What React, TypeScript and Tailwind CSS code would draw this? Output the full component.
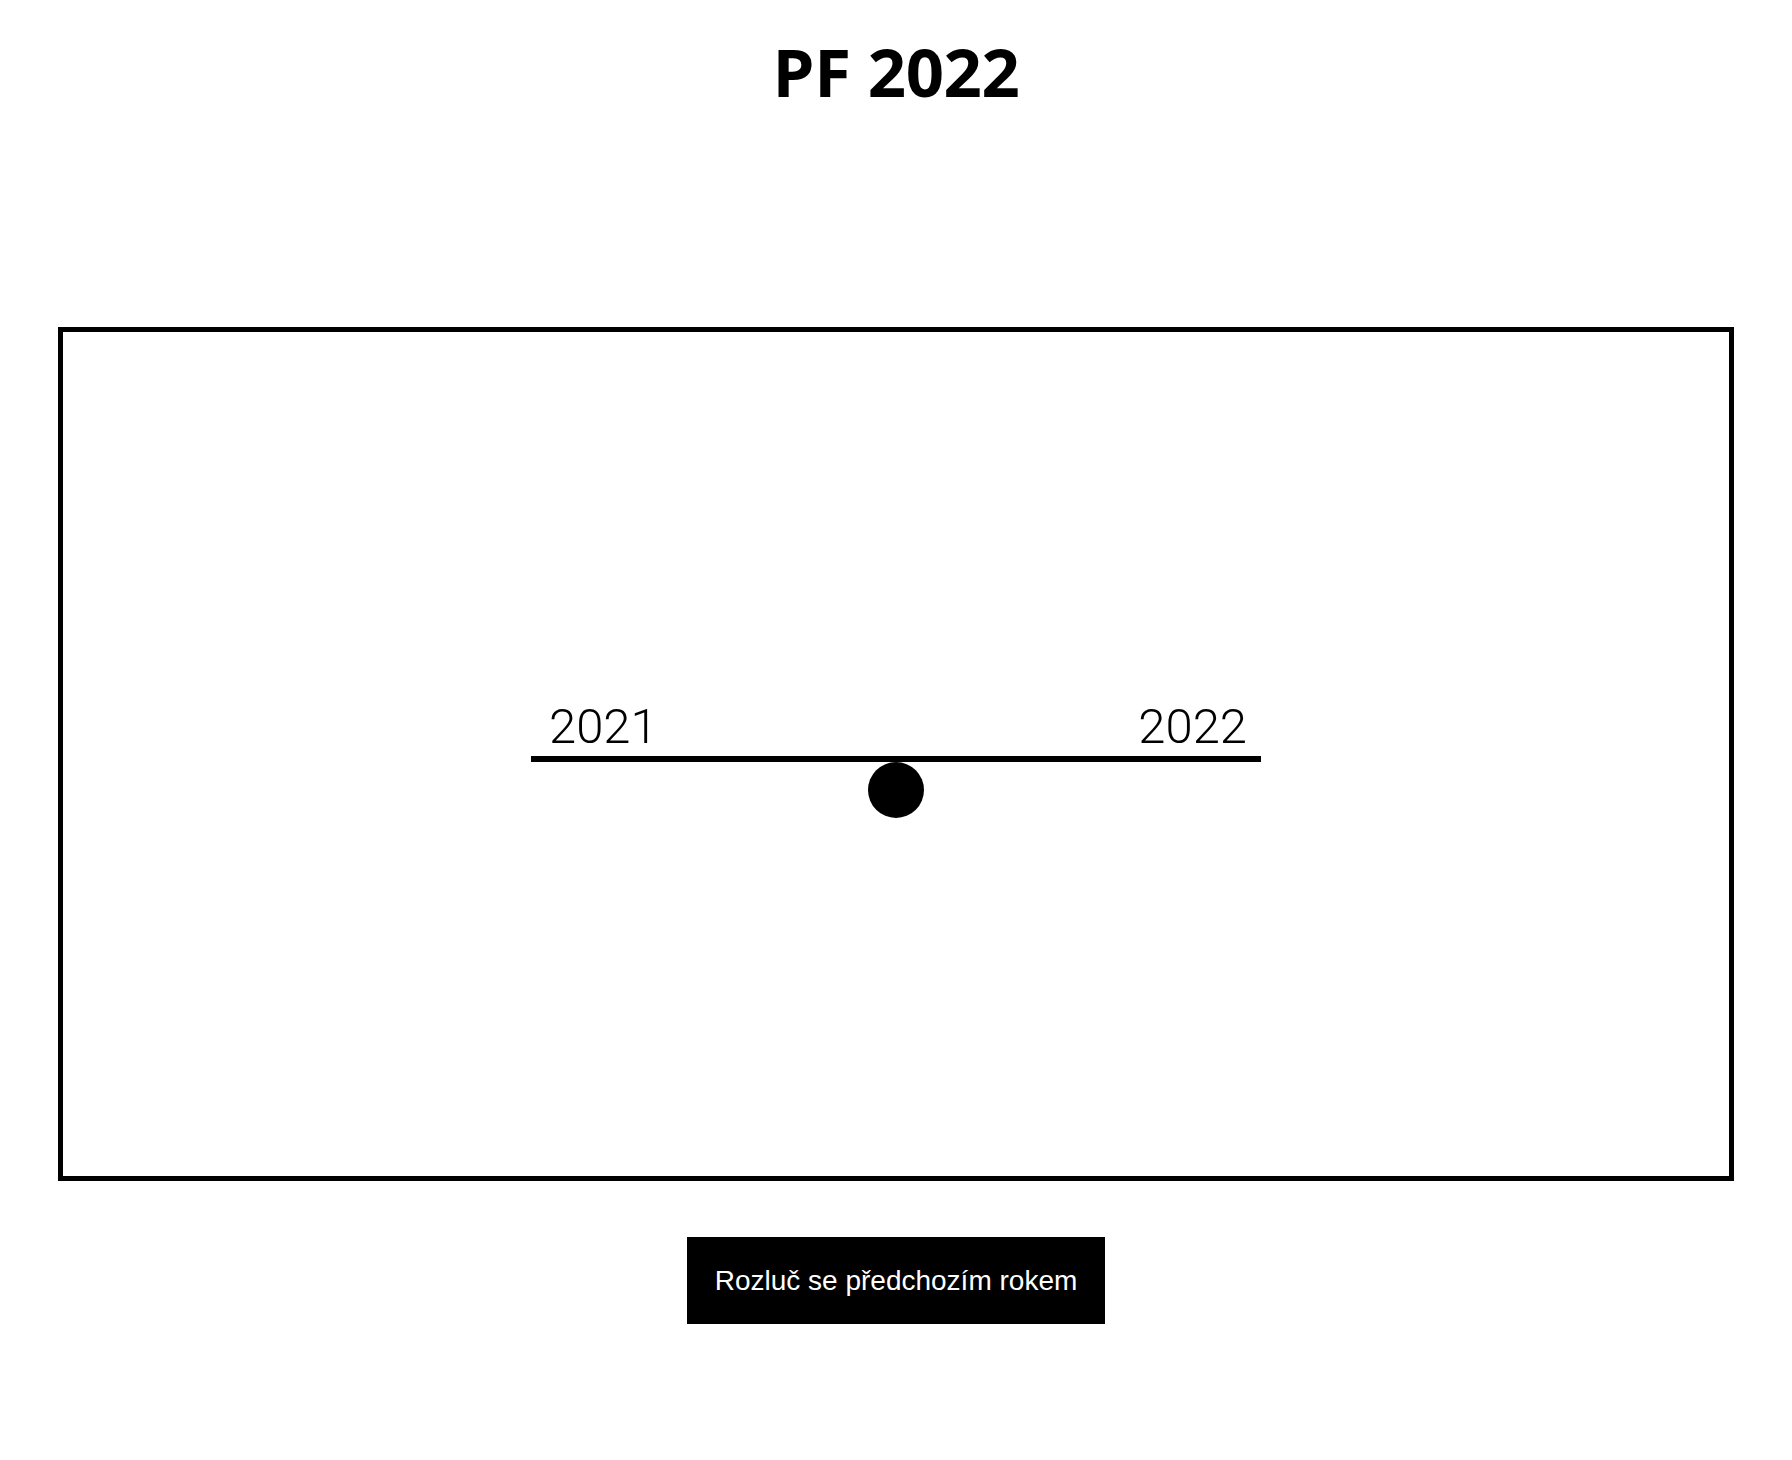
import React from "react";

export default function App() {
  return (
    <div className="min-h-screen bg-white text-black flex flex-col items-center">
      {/* Title */}
      <h1
        className="pt-[38px] text-[67px] leading-none font-bold tracking-[-0.005em]"
        style={{ fontFamily: '"Open Sans", "Liberation Sans", sans-serif' }}
      >
        PF 2022
      </h1>

      {/* Seesaw frame */}
      <div className="w-full px-[58px] mt-[222px]">
        <div className="h-[854px] border-[5px] border-black flex flex-col items-center justify-center">
          <div className="w-[730px] flex flex-col items-center">
            <div
              className="w-full h-[65px] flex items-end justify-between pl-[18px] pr-[14px] pb-[5px] text-[49px] leading-none font-light"
              style={{ fontFamily: 'Roboto, "Open Sans", sans-serif' }}
            >
              <span>2021</span>
              <span>2022</span>
            </div>
            <div className="w-full h-[6px] bg-black" />
            <div className="w-[56px] h-[56px] rounded-full bg-black" />
          </div>
        </div>
      </div>

      {/* Action */}
      <button
        className="mt-[56px] bg-black text-white px-[28px] py-[27px] text-[28px] leading-[33px]"
        style={{ fontFamily: '"Liberation Sans", Arial, sans-serif' }}
      >
        Rozluč se předchozím rokem
      </button>
    </div>
  );
}
